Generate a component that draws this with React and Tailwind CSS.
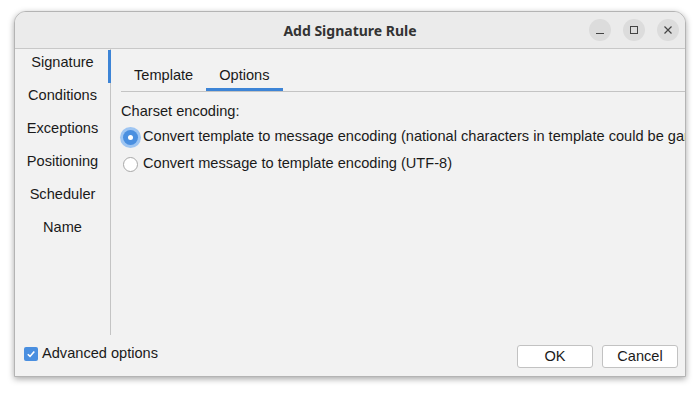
import React from 'react'

const sideItems = ['Signature', 'Conditions', 'Exceptions', 'Positioning', 'Scheduler', 'Name']

const Radio = ({ checked }) =>
  checked ? (
    <span className="w-[15px] h-[15px] rounded-full bg-[#4a8fe0] ring-[3px] ring-[#9ec5f2] flex items-center justify-center shrink-0">
      <span className="w-[5px] h-[5px] rounded-full bg-white" />
    </span>
  ) : (
    <span className="w-[15px] h-[15px] rounded-full bg-white border border-[#a8a8a8] shrink-0" />
  )

export default function App() {
  return (
    <div className="w-[700px] h-[394px] bg-white overflow-hidden" style={{ fontFamily: '"Liberation Sans", Arial, sans-serif' }}>
      <div className="ml-[14px] mt-[11px] w-[672px] h-[366px] bg-[#f2f2f2] border border-[#b4b4b4] rounded-t-[12px] shadow-[0_2px_6px_rgba(0,0,0,0.35)] flex flex-col overflow-hidden text-[14.6px] text-[#1a1a1a]">
        {/* Title bar */}
        <div className="h-[37px] shrink-0 bg-[#ebebeb] border-b border-[#c8c8c8] flex items-center relative">
          <div className="flex-1 text-center font-bold text-[14px] text-[#333]" style={{ fontFamily: '"Noto Sans", sans-serif' }}>
            Add Signature Rule
          </div>
          <div className="absolute right-[6px] top-[7px] flex gap-[12px]">
            <span className="w-[22px] h-[22px] rounded-full bg-[#dcdcdc] flex items-center justify-center">
              <span className="w-[8px] h-[1.5px] bg-[#444] mt-[7px]" />
            </span>
            <span className="w-[22px] h-[22px] rounded-full bg-[#dcdcdc] flex items-center justify-center">
              <span className="w-[8px] h-[8px] border border-[#444]" />
            </span>
            <span className="w-[22px] h-[22px] rounded-full bg-[#dcdcdc] flex items-center justify-center">
              <svg width="10" height="10" viewBox="0 0 10 10">
                <path d="M1.5 1.5 L8.5 8.5 M8.5 1.5 L1.5 8.5" stroke="#444" strokeWidth="1.2" />
              </svg>
            </span>
          </div>
        </div>

        {/* Main */}
        <div className="flex flex-1 min-h-0">
          <div className="w-[96px] shrink-0 border-r border-[#c4c4c4] relative flex flex-col gap-[5px]">
            <span className="absolute right-[-1px] top-[1px] w-[3px] h-[33px] bg-[#3d84d6]" />
            {sideItems.map((s) => (
              <div key={s} className="h-[28px] flex items-center justify-center">
                {s}
              </div>
            ))}
          </div>
          <div className="flex-1 pl-[10px] pt-[11px]">
            <div className="flex border-b border-[#c4c4c4] h-[32px]">
              <div className="px-[13px] flex items-center">Template</div>
              <div className="px-[13px] flex items-center border-b-[3px] border-[#3d84d6] pt-[3px]">Options</div>
            </div>
            <div className="mt-[10px] leading-[18px]">Charset encoding:</div>
            <div className="mt-[8px] flex items-center gap-[5px] ml-[2px] whitespace-nowrap h-[18px]">
              <Radio checked />
              <span>Convert template to message encoding (national characters in template could be garbled)</span>
            </div>
            <div className="mt-[9px] flex items-center gap-[5px] ml-[2px] whitespace-nowrap h-[18px]">
              <Radio />
              <span>Convert message to template encoding (UTF-8)</span>
            </div>
          </div>
        </div>

        {/* Bottom */}
        <div className="h-[41px] shrink-0 flex items-start justify-between pl-[9px] pr-[7px]">
          <div className="flex items-center gap-[4px] mt-[8px]">
            <span className="w-[14px] h-[14px] rounded-[2px] bg-[#4a8fe0] flex items-center justify-center">
              <svg width="10" height="10" viewBox="0 0 10 10">
                <path d="M1.8 5.2 L4 7.4 L8.3 2.4" stroke="white" strokeWidth="1.6" fill="none" />
              </svg>
            </span>
            <span>Advanced options</span>
          </div>
          <div className="flex gap-[9px] mt-[10px]">
            <button className="w-[76px] h-[23px] bg-white border border-[#c2c2c2] rounded-[3px]">OK</button>
            <button className="w-[76px] h-[23px] bg-white border border-[#c2c2c2] rounded-[3px]">Cancel</button>
          </div>
        </div>
      </div>
    </div>
  )
}
